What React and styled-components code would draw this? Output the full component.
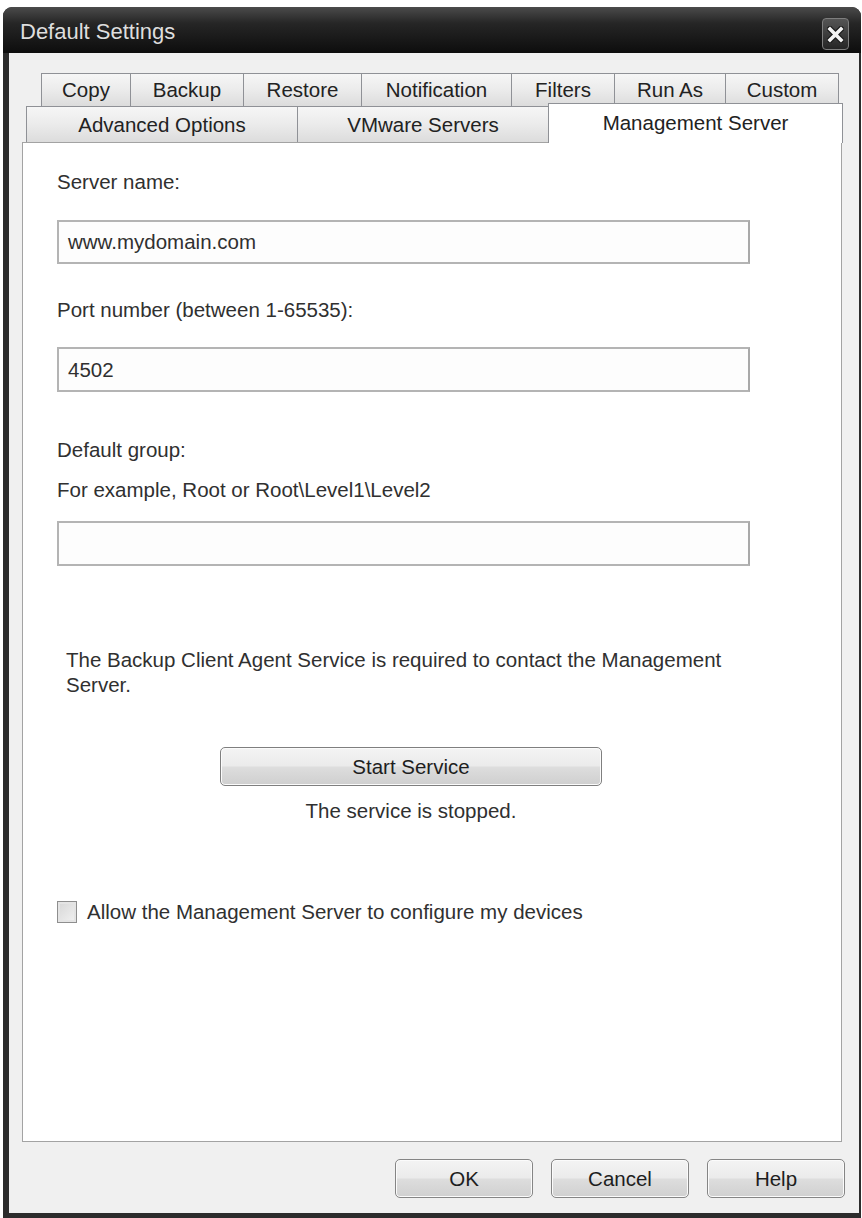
import React from 'react';
import styled, { createGlobalStyle } from 'styled-components';

const GlobalStyle = createGlobalStyle`
  html, body {
    margin: 0;
    padding: 0;
    background: #ffffff;
  }
  body {
    font-family: "Liberation Sans", Arial, sans-serif;
    color: #303030;
  }
`;

const Page = styled.div`
  padding: 7px 1px 0 3px;
`;

const Window = styled.div`
  width: 858px;
  height: 1211px;
  box-sizing: border-box;
  display: flex;
  flex-direction: column;
  background: #2c2c2c;
  border-radius: 9px 9px 0 0;
  overflow: hidden;
`;

const TitleBar = styled.div`
  height: 46px;
  flex: none;
  box-sizing: border-box;
  display: flex;
  align-items: center;
  justify-content: space-between;
  padding: 4px 12px 0 17px;
  background: linear-gradient(#4b4b4b 0%, #262626 35%, #0d0d0d 100%);
`;

const Title = styled.div`
  font-size: 22px;
  color: #dedede;
`;

const CloseButton = styled.div`
  width: 27px;
  height: 32px;
  margin-top: 4px;
  box-sizing: border-box;
  display: flex;
  align-items: center;
  justify-content: center;
  border: 1px solid #7e7e7e;
  border-radius: 4px;
  background: linear-gradient(#555555, #262626);
`;

const Frame = styled.div`
  flex: 1;
  display: flex;
  padding: 0 6px 5px 6px;
`;

const Body = styled.div`
  flex: 1;
  display: flex;
  flex-direction: column;
  background: #f0f0f0;
  padding: 20px 17px 0 13px;
`;

const TabRow = styled.div`
  display: flex;
  padding-left: ${(p) => p.$indent}px;
  height: ${(p) => p.$height}px;
  position: relative;
`;

const Tab = styled.div`
  width: ${(p) => p.$width}px;
  box-sizing: border-box;
  display: flex;
  align-items: center;
  justify-content: center;
  font-size: 20.5px;
  color: #222;
  border: 1px solid #8f9196;
  border-bottom: none;
  margin-right: -1px;
  white-space: nowrap;
  background: ${(p) =>
    p.$active ? '#ffffff' : 'linear-gradient(#f6f6f6 0%, #ebebeb 50%, #dcdcdc 100%)'};
  ${(p) =>
    p.$active &&
    `
    margin-top: -3px;
    height: calc(100% + 4px);
    position: relative;
    z-index: 2;
    align-items: flex-start;
    padding-top: 7px;
    `}
`;

const Panel = styled.div`
  height: 1000px;
  box-sizing: border-box;
  background: #ffffff;
  border: 1px solid #a3a3a3;
  padding: 28px 0 0 34px;
  display: flex;
  flex-direction: column;
  align-items: flex-start;
`;

const Label = styled.div`
  font-size: 20.5px;
  line-height: 22px;
  margin-top: ${(p) => p.$gap || 0}px;
`;

const TextBox = styled.div`
  width: 693px;
  height: ${(p) => p.$height}px;
  margin-top: ${(p) => p.$gap}px;
  box-sizing: border-box;
  border: 2px solid #b4b4b4;
  border-right-color: #a9a9a9;
  padding-left: 9px;
  display: flex;
  align-items: center;
  font-size: 20.5px;
  background: #fdfdfd;
`;

const Note = styled.p`
  margin: 81px 0 0 9px;
  width: 700px;
  font-size: 20.5px;
  line-height: 25px;
`;

const ServiceButton = styled.div`
  width: 382px;
  height: 39px;
  margin: 50px 0 0 163px;
  box-sizing: border-box;
  display: flex;
  align-items: center;
  justify-content: center;
  font-size: 20.5px;
  color: #1e1e1e;
  border: 1px solid #7f7f7f;
  border-radius: 5px;
  background: linear-gradient(#f4f4f4 0%, #ebebeb 48%, #dddddd 52%, #cfcfcf 100%);
  box-shadow: inset 0 0 0 1px #fbfbfb;
`;

const Status = styled.div`
  width: 382px;
  margin: 14px 0 0 163px;
  text-align: center;
  font-size: 20.5px;
  line-height: 22px;
`;

const CheckRow = styled.div`
  margin-top: 79px;
  display: flex;
  align-items: center;
  gap: 10px;
  font-size: 20.5px;
  line-height: 22px;
`;

const CheckBox = styled.div`
  width: 20px;
  height: 22px;
  box-sizing: border-box;
  border: 1px solid #8e8e8e;
  background: linear-gradient(135deg, #d6d6d6, #f2f2f2);
  box-shadow: inset 0 0 0 2px #e4e4e4;
`;

const Footer = styled.div`
  display: flex;
  justify-content: flex-end;
  gap: 18px;
  padding-top: 17px;
  margin-right: -3px;
`;

const DialogButton = styled.div`
  width: 138px;
  height: 39px;
  box-sizing: border-box;
  display: flex;
  align-items: center;
  justify-content: center;
  font-size: 20.5px;
  color: #1e1e1e;
  border: 1px solid #858585;
  border-radius: 5px;
  background: linear-gradient(#f4f4f4 0%, #ebebeb 48%, #dddddd 52%, #d0d0d0 100%);
  box-shadow: inset 0 0 0 1px #fbfbfb;
`;

const topTabs = [
  { name: 'Copy', width: 90 },
  { name: 'Backup', width: 114 },
  { name: 'Restore', width: 119 },
  { name: 'Notification', width: 151 },
  { name: 'Filters', width: 104 },
  { name: 'Run As', width: 112 },
  { name: 'Custom', width: 114 },
];

const bottomTabs = [
  { name: 'Advanced Options', width: 272 },
  { name: 'VMware Servers', width: 252 },
  { name: 'Management Server', width: 295, active: true },
];

const CloseIcon = () => (
  <svg width="17" height="17" viewBox="0 0 17 17">
    <path d="M3 3 L14 14 M14 3 L3 14" stroke="#1a1a1a" strokeWidth="6" strokeLinecap="square" />
    <path d="M3 3 L14 14 M14 3 L3 14" stroke="#f4f4f4" strokeWidth="3.6" strokeLinecap="square" />
  </svg>
);

const App = () => (
  <Page>
    <GlobalStyle />
    <Window>
      <TitleBar>
        <Title>Default Settings</Title>
        <CloseButton>
          <CloseIcon />
        </CloseButton>
      </TitleBar>
      <Frame>
        <Body>
          <TabRow $indent={19} $height={33}>
            {topTabs.map((tab) => (
              <Tab key={tab.name} $width={tab.width}>
                {tab.name}
              </Tab>
            ))}
          </TabRow>
          <TabRow $indent={4} $height={36}>
            {bottomTabs.map((tab) => (
              <Tab key={tab.name} $width={tab.width} $active={tab.active}>
                {tab.name}
              </Tab>
            ))}
          </TabRow>
          <Panel>
            <Label>Server name:</Label>
            <TextBox $gap={27} $height={44}>www.mydomain.com</TextBox>
            <Label $gap={35}>Port number (between 1-65535):</Label>
            <TextBox $gap={26} $height={45}>4502</TextBox>
            <Label $gap={47}>Default group:</Label>
            <Label $gap={18}>For example, Root or Root\Level1\Level2</Label>
            <TextBox $gap={20} $height={45} />
            <Note>
              The Backup Client Agent Service is required to contact the Management Server.
            </Note>
            <ServiceButton>Start Service</ServiceButton>
            <Status>The service is stopped.</Status>
            <CheckRow>
              <CheckBox />
              Allow the Management Server to configure my devices
            </CheckRow>
          </Panel>
          <Footer>
            <DialogButton>OK</DialogButton>
            <DialogButton>Cancel</DialogButton>
            <DialogButton>Help</DialogButton>
          </Footer>
        </Body>
      </Frame>
    </Window>
  </Page>
);

export default App;
